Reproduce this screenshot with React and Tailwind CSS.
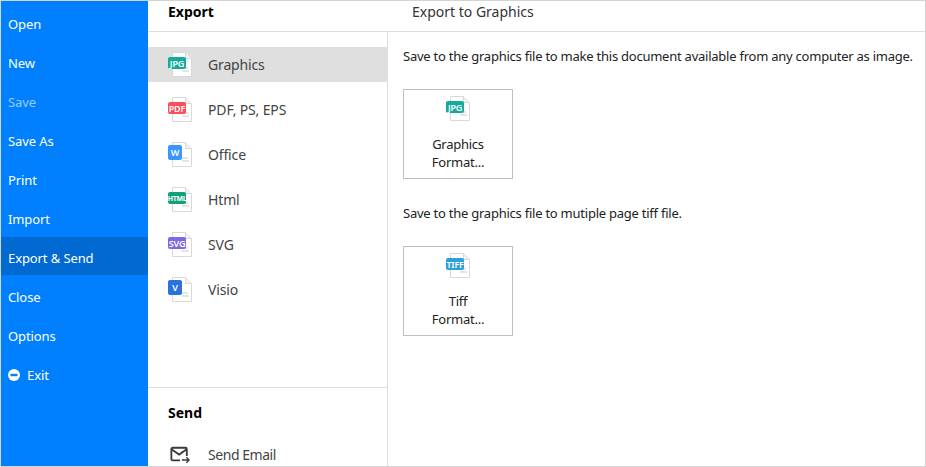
const FONT = "font-['Noto_Sans','Open_Sans',sans-serif]"

const MENU = [
  { label: 'Open' },
  { label: 'New' },
  { label: 'Save', dim: true },
  { label: 'Save As' },
  { label: 'Print' },
  { label: 'Import' },
  { label: 'Export & Send', active: true },
  { label: 'Close' },
  { label: 'Options' },
]

const FORMATS = [
  { label: 'Graphics', badge: 'JPG', color: 'bg-[#14ab9c]', wide: true, active: true },
  { label: 'PDF, PS, EPS', badge: 'PDF', color: 'bg-[#fb4f58]', wide: true },
  { label: 'Office', badge: 'W', color: 'bg-[#3b96fb]' },
  { label: 'Html', badge: 'HTML', color: 'bg-[#12a07c]', wide: true, tight: true },
  { label: 'SVG', badge: 'SVG', color: 'bg-[#7d68e6]', wide: true },
  { label: 'Visio', badge: 'V', color: 'bg-[#2b72dc]' },
]

function FileIcon({ badge, color, wide, tight }) {
  return (
    <div className="relative w-[24px] h-[25px] shrink-0">
      <svg className="absolute left-[4px] top-0" width="20" height="25" viewBox="0 0 20 25" fill="none">
        <path d="M.5.5h13l6 6v18H.5z" fill="#fff" stroke="#d9d9d9" />
        <path d="M13.500.5v6h6" fill="#f1f1f1" stroke="#d9d9d9" />
        <path d="M8 15h8v2H8zM10 18h7v2h-7z" fill="#e4e4e4" />
      </svg>
      <span className={`absolute left-0 rounded-[2px] ${color} ${wide ? 'w-[18px] h-[12px] top-[5px]' : 'w-[14px] h-[15px] top-[3px]'} ${tight ? 'text-[7px] font-bold tracking-[-0.4px]' : 'text-[9px] font-semibold'} flex items-center justify-center text-white leading-none`}>
        {badge}
      </span>
    </div>
  )
}

function FormatCard({ badge, color, line1 }) {
  return (
    <div className="w-[110px] h-[90px] border border-[#c0c0c0] flex flex-col items-center pt-[6px]">
      <FileIcon badge={badge} color={color} wide />
      <p className="mt-[14px] text-[13px] leading-[18px] tracking-[-0.25px] text-[#222] text-center">{line1}<br />Format...</p>
    </div>
  )
}

export default function App() {
  return (
    <div className={`${FONT} w-[926px] h-[467px] flex flex-col border border-[#d4d4d4] bg-white overflow-hidden`}>
      <div className="flex flex-1 min-h-0">
        {/* Left menu */}
        <div className="w-[147px] shrink-0 bg-[#007fff] pt-[2px] text-[13px] tracking-[-0.1px] text-white">
          {MENU.map(item => (
            <div
              key={item.label}
              className={`flex items-center pl-[7px] ${item.active ? 'h-[38px] mb-[1px] pt-[5px] bg-[#0069d2]' : 'h-[39px] pt-[4px]'} ${item.dim ? 'text-white/60' : ''}`}
            >
              {item.label}
            </div>
          ))}
          <div className="h-[39px] flex items-center pl-[7px] pt-[4px] gap-[7px]">
            <svg className="-mt-[1px]" width="12" height="12" viewBox="0 0 12 12">
              <circle cx="6" cy="6" r="6" fill="#fff" />
              <rect x="2.500" y="4.800" width="7" height="2.400" fill="#007fff" />
            </svg>
            Exit
          </div>
        </div>

        <div className="flex-1 flex flex-col min-w-0">
          {/* Header */}
          <div className="h-[31px] shrink-0 flex items-center border-b border-[#dddddd] pb-[10px]">
            <span className="w-[264px] pl-[20px] text-[14px] font-bold text-black">Export</span>
            <span className="text-[14px] text-[#333]">Export to Graphics</span>
          </div>

          <div className="flex flex-1 min-h-0">
            {/* Format list */}
            <div className="w-[240px] shrink-0 border-r border-[#dddddd] flex flex-col">
              <div className="pt-[15px] flex-1">
                {FORMATS.map(f => (
                  <div key={f.label} className={`h-[35px] mb-[10px] flex items-center pl-[20px] gap-[16px] text-[14px] tracking-[-0.15px] text-[#444] ${f.active ? 'bg-[#dfdfdf]' : ''}`}>
                    <FileIcon badge={f.badge} color={f.color} wide={f.wide} tight={f.tight} />
                    {f.label}
                  </div>
                ))}
              </div>
              <div className="h-[79px] shrink-0 border-t border-[#dddddd] pl-[20px]">
                <p className="mt-[15px] text-[14px] leading-[20px] font-bold text-black">Send</p>
                <div className="mt-[21px] pl-[2px] flex items-center gap-[18px] text-[14px] tracking-[-0.45px] text-[#444]">
                  <svg width="20" height="18" viewBox="0 0 22 18" fill="none" stroke="#3a3a3a" strokeWidth="2">
                    <path d="M11 15H3a1.500 1.500 0 0 1-1.500-1.500V2.500A1.500 1.500 0 0 1 3 1h14a1.500 1.500 0 0 1 1.500 1.500V10" />
                    <path d="M2 3l8 5.500L18 3" />
                    <path d="M13 14.500h7.500M18 11.500l3 3-3 3" strokeWidth="1.600" />
                  </svg>
                  Send Email
                </div>
              </div>
            </div>

            {/* Right pane */}
            <div className="flex-1 pl-[15px] pt-[15px] text-[13px] text-[#222] tracking-[-0.24px]">
              <p className="leading-[18px] whitespace-nowrap">Save to the graphics file to make this document available from any computer as image.</p>
              <div className="mt-[24px]">
                <FormatCard badge="JPG" color="bg-[#14ab9c]" line1="Graphics" />
              </div>
              <p className="mt-[25px] leading-[18px]">Save to the graphics file to mutiple page tiff file.</p>
              <div className="mt-[24px]">
                <FormatCard badge="TIFF" color="bg-[#2f9fd8]" line1="Tiff" />
              </div>
            </div>
          </div>
        </div>
      </div>
    </div>
  )
}
